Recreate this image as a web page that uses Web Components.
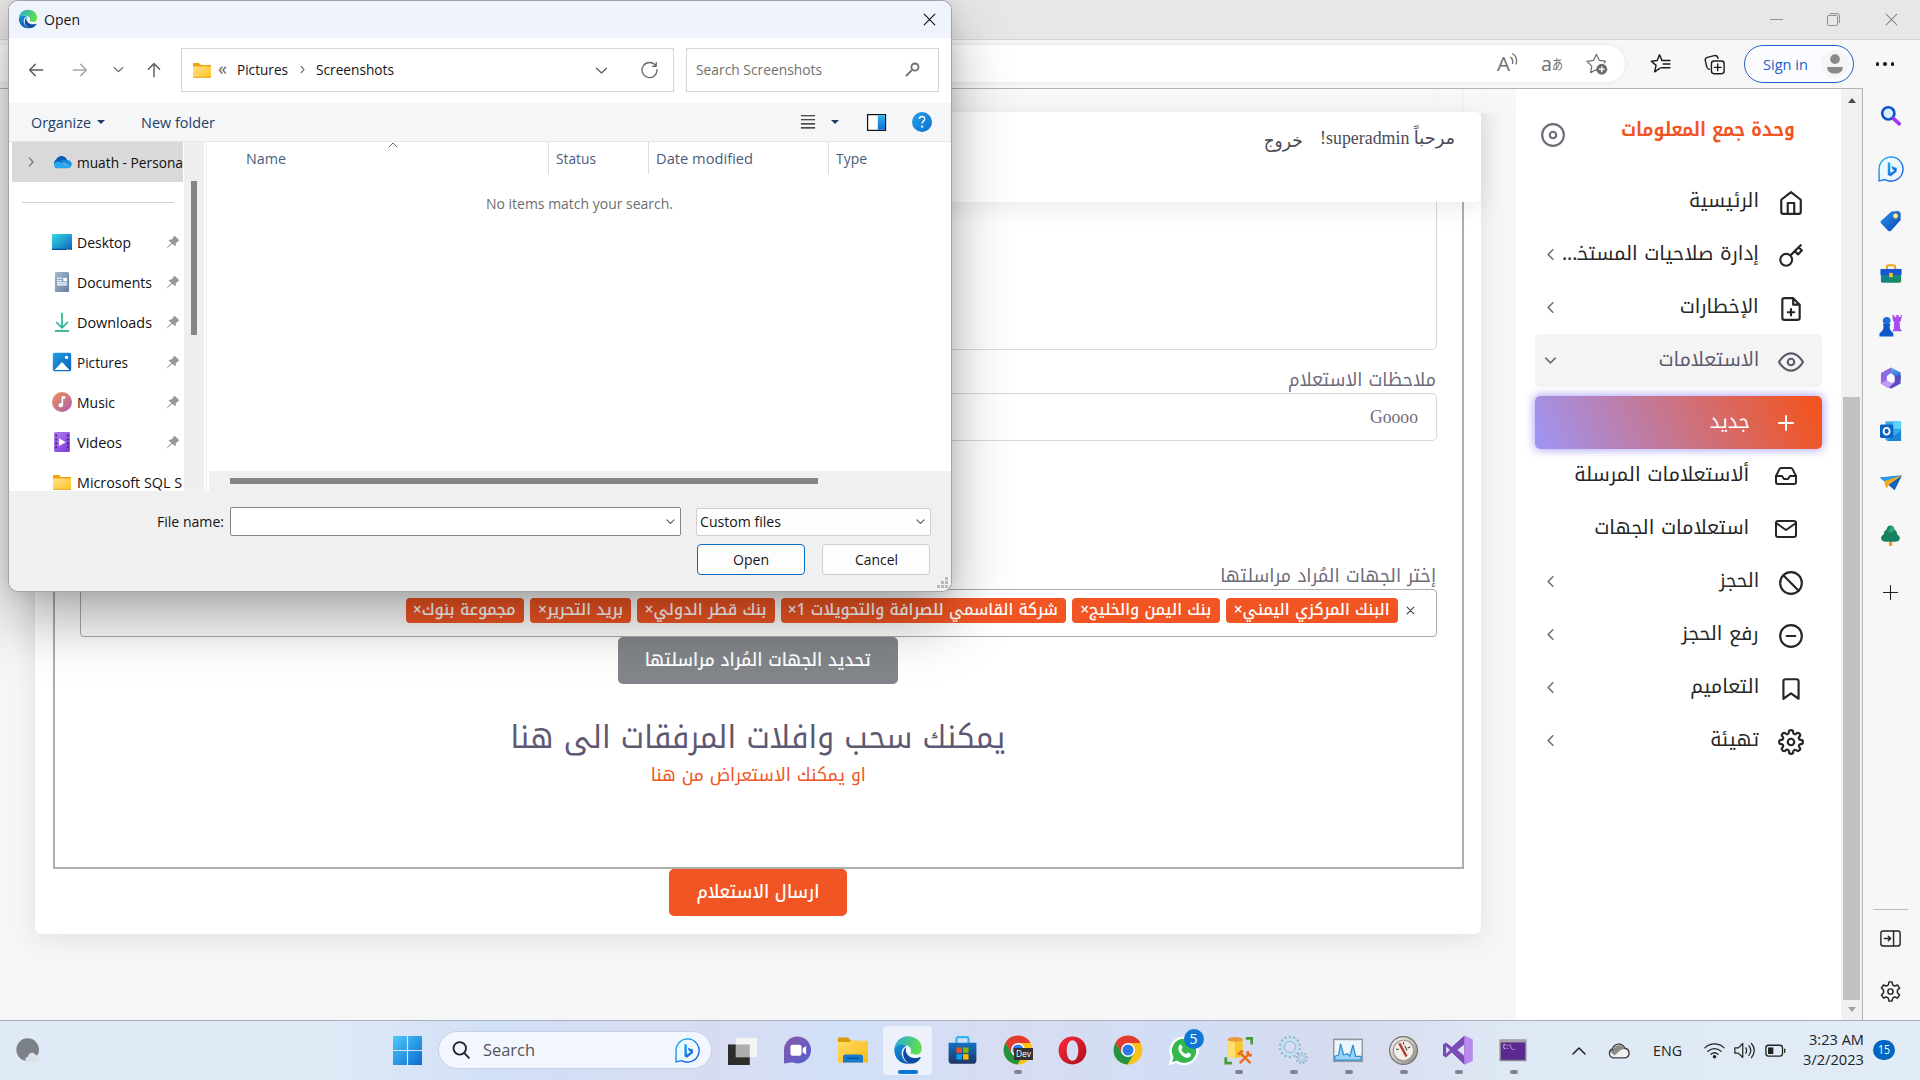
<!DOCTYPE html>
<html lang="en">
<head>
<meta charset="utf-8">
<title>Open</title>
<style>
html,body{margin:0;padding:0;width:1920px;height:1080px;overflow:hidden;background:#f7f7f7}
body{font-family:"Open Sans","Noto Sans",sans-serif}
</style>
</head>
<body>
<desk-top></desk-top>
<script>
const A='"Noto Kufi Arabic","Noto Sans Arabic","DejaVu Sans",sans-serif';
const bingB='<path d="M9 5.5l2.4.9v9.2l4-2.2-2-1-1.2-3.1 5 1.8v3.2L11.4 19 9 17.4z" fill="url(#b)"/>';
const grad=(id,a,b,x='1',y='1')=>`<linearGradient id="${id}" x1="0" y1="0" x2="${x}" y2="${y}"><stop stop-color="${a}"/><stop offset="1" stop-color="${b}"/></linearGradient>`;
const line=(s,w=2)=>`<g fill="none" stroke="currentColor" stroke-width="${w}" stroke-linecap="round" stroke-linejoin="round">${s}</g>`;
const chrome='<circle cx="12" cy="12" r="11.5" fill="#fbc116"/><path d="M2 6.2A11.5 11.5 0 0 1 22 6.4H12L7 15z" fill="#e33b2e"/><path d="M2 6.2A11.5 11.5 0 0 0 11.5 23.5L16.8 15 7.2 15z" fill="#229342"/><circle cx="12" cy="12" r="5.6" fill="#fff"/><circle cx="12" cy="12" r="4.4" fill="#2f78ea"/>';
const teeth=(cx,cy,r,n,w,h)=>Array.from({length:n},(_,i)=>`<rect x="${cx-w/2}" y="${cy-r-h}" width="${w}" height="${h+1}" rx=".5" transform="rotate(${360/n*i} ${cx} ${cy})"/>`).join('');
const ICONS={
edge:grad('e1','#25a7dd','#62dd4e','1','.3')+grad('e2','#1493df','#0c63b8','.4','1')+'<path d="M1 11.5C1.5 5 6.5 1 12 1c6 0 11 4.2 11 9.6 0 3.8-2.7 5.6-5.8 5.6-2.8 0-3.8-1-3.2-2 1.2-2 .2-5-3.6-6C6.500 7.200 2.500 8.500 1 11.500z" fill="url(#e1)"/><path d="M1 11.8C2 8 6.500 6.800 10.800 8.300 7.500 10 6.200 13 7.200 16.500 8.200 20 11 22.400 14.500 22.700 7 24.600 1 19 1 11.800z" fill="url(#e2)"/><path d="M10.600 9.500C6.500 13 7.600 19.500 12.800 22.600c4 1 7.600-1.200 9.200-4.300.3-.7-.2-.9-.8-.6C16 20 8.800 16.600 10.600 9.500z" fill="#0b4ba0"/><path d="M13.800 14.500c-.8 1.200.4 3.200 3.800 3 1.800 0 3.400-.6 4.400-1.200l-4-1z" fill="#fff" opacity=".75"/><circle cx="12.200" cy="12.400" r="2" fill="#eef6ff"/>',
folder:grad('f','#ffe089','#ffc526')+'<path d="M3 5h6l2 2h10v5H3z" fill="#f0a410"/><path d="M3 8.500h18V19.500H3z" fill="url(#f)"/><path d="M3 18.800h18v1H3z" fill="#e3a328"/>',
left:line('<path d="M21 12H3.500M11 4.500L3.500 12l7.500 7.500"/>',1.9),
right:line('<path d="M3 12h17.500M13 4.500l7.500 7.500-7.500 7.500"/>',1.9),
up:line('<path d="M12 21V3.500M4.500 11L12 3.500l7.500 7.500"/>',1.9),
down:line('<path d="M4 8.500l8 7.500 8-7.500"/>',2.3),
chevR:line('<path d="M9 5l6.500 7L9 19"/>',2.2),
chevL:line('<path d="M15 18l-6-6 6-6"/>',2),
chevD:line('<path d="M6 9l6 6 6-6"/>',2),
x:line('<path d="M3.500 3.500l17 17M20.500 3.500l-17 17"/>',1.8),
refresh:line('<path d="M20 7.500A9.500 9.500 0 1 0 21.500 12M20.500 3v5h-5"/>',1.6),
mag:line('<circle cx="15.500" cy="8.500" r="5"/><path d="M11.500 12.500L3.500 20.500"/>',2.6),
search:line('<circle cx="10.500" cy="10" r="7.500"/><path d="M16 15.800L21.500 21.500"/>',2.2),
onedrive:'<path d="M4 17a5 5 0 0 1 1-8 7 7 0 0 1 12-1.500l1.500 3z" fill="#0a5db5"/><path d="M9 10.500l10-1a5 5 0 0 1 3.500 8z" fill="#1490df"/><path d="M4.500 19.500a4.500 4.500 0 0 1 0-7.500c2-1.200 4-.7 5.500.2l13 5.300c-.8 1.500-2 2-3.500 2z" fill="#28a8ea"/>',
desktop:grad('d','#35d9e3','#0b62c0')+'<rect y="2.500" width="24" height="19" rx="1.500" fill="url(#d)"/><path d="M0 20h24v1.500H0z" fill="#0b4e94"/><path d="M18 20.300h1.500v1H18zM21 20.300h1.500v1H21z" fill="#fff"/>',
doc:grad('d','#a6bad0','#647f9f')+'<rect x="3.500" width="17" height="24" rx="1.500" fill="url(#d)"/><path d="M6 7.500h6M6 10.500h6M6 13h12M6 15.500h12" stroke="#fff" stroke-width="1.400"/><rect x="13.500" y="7" width="4.500" height="4" fill="#fff"/>',
dl:'<path d="M12 1v17M5 12l7 7 7-7" fill="none" stroke="#22b893" stroke-width="2"/><path d="M3.500 22.800h17" stroke="#1fa98a" stroke-width="2"/>',
pic:grad('d','#229fe4','#0a5fb8')+'<rect x="1" y="1" width="22" height="22" rx="2" fill="url(#d)"/><path d="M3 21.500L12 12l9 9.500z" fill="#fff"/><circle cx="17.500" cy="6.500" r="2" fill="#fff"/>',
music:grad('d','#f39353','#a85cb4')+'<circle cx="12" cy="12" r="12" fill="url(#d)"/><circle cx="10.500" cy="15.800" r="2.600" fill="#fff"/><path d="M11.500 16V5h4.500v3h-2.600v8z" fill="#fff"/>',
video:grad('d','#b27cf0','#7b38d8')+'<rect x="2.500" width="19" height="24" rx="1.500" fill="url(#d)"/><path d="M5 3v19M19 3v19" stroke="#4b1f8c" stroke-width="2.200" stroke-dasharray="2.500 2.200"/><path d="M8.500 7.500l8 4.700-8 4.700z" fill="#fff"/>',
pin:'<path d="M14.500 1l8.500 8.500-2 .8-4 3.700c.3 2.500-.1 4-1.200 5L10.500 15 3.500 21.500 1 23l1.500-2.500L9 13.500 4.500 9c1-1 3-1.500 5-1.200L13.500 3z" fill="#8f989f"/>',
help:grad('d','#29a0e8','#0671cf')+'<circle cx="12" cy="12" r="12" fill="url(#d)"/><path d="M8.800 8.500c.2-4 6.500-4 6.500-.2 0 2.500-3.100 2.600-3.100 5.500" fill="none" stroke="#fff" stroke-width="1.700"/><circle cx="12.200" cy="17.600" r="1.300" fill="#fff"/>',
list:'<path d="M3.500 4.500h17M3.500 9.300h17M3.500 14.200h17M3.500 19h17" stroke="#111" stroke-width="1.300"/>',
pane:grad('d','#33b4ee','#0a6fd0','0','1')+'<rect x="1.800" y="3" width="20.500" height="18" fill="#fff" stroke="#111" stroke-width="1.400"/><path d="M13.500 3.700h8.200v16.600h-8.200z" fill="url(#d)"/>',
starplus:line('<path d="M13 19l-1-.8-6.200 3.300 1.300-6.800L2 9.700l6.800-.9L12 2.500l3 6.300 6.500.8-1.500 1.800"/>',1.3)+'<circle cx="17.500" cy="18" r="5.700" fill="#6b6b6b"/><path d="M17.500 15v6M14.500 18h6" stroke="#fff" stroke-width="1.500"/>',
fav:line('<path d="M12 16.500l-5.800 4 1.500-7L2.500 9l6.400-.8L11.500 2l2.600 6.200h3M15.500 12h7.300M13.500 16.200h9.300M15.500 8.200h7.300"/>',1.6),
coll:line('<rect x="8.500" y="8" width="14.500" height="14.500" rx="3"/><path d="M15.700 11.500v7.500M12 15.300h7.500M6 17.500c-1.500-.2-2.300-1-2.700-2.500L1.500 7.500C1 5.500 2 4.300 3.800 3.800l8-2C14 1.500 15.500 2.500 16 5"/>',1.6),
user:'<circle cx="12" cy="12" r="12" fill="#f5f5f5"/><circle cx="12" cy="7.800" r="4.200" fill="#888"/><path d="M5.500 14.500h13c.6 3.500-2.300 5.700-6.500 5.700s-7.100-2.200-6.500-5.700z" fill="#888"/>',
disc:line('<circle cx="12" cy="12" r="10"/><circle cx="12" cy="12" r="3"/>'),
home:line('<path d="M3 9l9-7 9 7v11a2 2 0 0 1-2 2H5a2 2 0 0 1-2-2z"/><path d="M9 22V12h6v10"/>'),
key:line('<path d="M21 2l-2 2m-7.610 7.610a5.500 5.500 0 1 1-7.778 7.778 5.500 5.500 0 0 1 7.777-7.777zm0 0L15.500 7.500m0 0l3 3L22 7l-3-3m-3.500 3.500L19 4"/>'),
file:line('<path d="M14 2H6a2 2 0 0 0-2 2v16a2 2 0 0 0 2 2h12a2 2 0 0 0 2-2V8zM14 2v6h6M12 18v-6M9 15h6"/>'),
eye:line('<path d="M1 12s4-8 11-8 11 8 11 8-4 8-11 8-11-8-11-8z"/><circle cx="12" cy="12" r="3"/>'),
plus:line('<path d="M12 5v14M5 12h14"/>'),
thinplus:line('<path d="M12 2v20M2 12h20"/>',1.5),
inbox:line('<path d="M22 12h-6l-2 3h-4l-2-3H2"/><path d="M5.450 5.110L2 12v6a2 2 0 0 0 2 2h16a2 2 0 0 0 2-2v-6l-3.450-6.890A2 2 0 0 0 16.760 4H7.240a2 2 0 0 0-1.790 1.110z"/>'),
mail:line('<rect x="2" y="4" width="20" height="16" rx="2"/><path d="M22 6l-10 7L2 6"/>'),
ban:line('<circle cx="12" cy="12" r="10"/><path d="M4.930 4.930l14.140 14.140"/>'),
minus:line('<circle cx="12" cy="12" r="10"/><path d="M8 12h8"/>'),
book:line('<path d="M19 21l-7-5-7 5V5a2 2 0 0 1 2-2h10a2 2 0 0 1 2 2z"/>'),
gear:line('<circle cx="12" cy="12" r="3"/><path d="M19.400 15a1.650 1.650 0 0 0 .33 1.820l.06.06a2 2 0 0 1-2.830 2.830l-.06-.06a1.650 1.650 0 0 0-2.800 1.170V21a2 2 0 0 1-4 0v-.09A1.650 1.650 0 0 0 7.100 19.730l-.06.06a2 2 0 0 1-2.830-2.830l.06-.06A1.650 1.650 0 0 0 3.090 14H3a2 2 0 0 1 0-4h.09A1.650 1.650 0 0 0 4.270 7.100l-.06-.06a2 2 0 0 1 2.830-2.830l.06.06A1.650 1.650 0 0 0 10 3.090V3a2 2 0 0 1 4 0v.09a1.650 1.650 0 0 0 2.900 1.180l.06-.06a2 2 0 0 1 2.830 2.830l-.06.06A1.650 1.650 0 0 0 20.910 10H21a2 2 0 0 1 0 4h-.09a1.650 1.650 0 0 0-1.510 1z"/>'),
gear6:line('<circle cx="12" cy="12" r="3"/><path d="M9.500 4.500L10.300 1h3.400l.8 3.500 2.200 1.300 3.500-1.200 2.200 3.500-2.500 2.500v2.800l2.500 2.500-2.200 3.500-3.500-1.200-2.200 1.300-.8 3.500h-3.400l-.8-3.500-2.200-1.300-3.500 1.200-2.200-3.500 2.500-2.500v-2.800L1.600 8.100l2.200-3.500 3.500 1.200z"/>',1.7),
panel:line('<rect x="1" y="3.500" width="22" height="17" rx="2.500"/><path d="M15.500 4v16M5 12h7M9.500 9.300l2.700 2.700-2.700 2.700"/>',1.6),
rsearch:'<circle cx="9.500" cy="9.500" r="7" fill="#d8efff" stroke="#0c55c8" stroke-width="3"/><path d="M15.500 15.500l6.500 6" stroke="#9b3df0" stroke-width="4.200" stroke-linecap="round"/>',
bing:grad('b','#1fb5ee','#1650d8')+'<path d="M12 .8A11.200 11.200 0 1 1 6.500 21.800L1 23V12A11.200 11.200 0 0 1 12 .8z" fill="#eef8ff" stroke="url(#b)" stroke-width="1.300"/>'+bingB,
tag:grad('d','#2b95ea','#0b46b8')+'<path d="M1 12L12.500 1.500 20 1l2.500 2v8L12 22.500c-1 .8-2 .8-3 0L1.500 15c-.9-1-1.300-2-.5-3z" fill="url(#d)"/><circle cx="17" cy="6.500" r="2.500" fill="#fff3b0" stroke="#f7bd26"/>',
tool:grad('d','#0b7fae','#1c8b52')+'<path d="M7.500 7V4.500c0-1.500 1-2 2-2h5c1 0 2 .5 2 2V7" fill="none" stroke="#e9a81c" stroke-width="2.200"/><rect x="1" y="10" width="22" height="11.500" rx="1.500" fill="url(#d)"/><path d="M.5 6.500h23V13H.5z" fill="#1556d4"/><rect x="10" y="10.500" width="4" height="5" rx="1" fill="#f6bc2b"/>',
chess:'<path d="M14 1h2v2h2V1h2.500v2h2V1H24l-1 6-1.500 1 .5 7 2 3H14l1.500-3 .3-7L14.500 7z" fill="#a94cf2"/><circle cx="8" cy="7" r="4" fill="#1670d8"/><path d="M4 10.500h8l-1 2.500c0 3 1.500 5 4 7v3.500H.5V20c3-2 4.300-4 4.300-7z" fill="#0f58c9"/>',
m365:grad('a','#68c1f5','#2b57d0')+'<path d="M12 .5L22.500 6v8l-7-3.500L12 6.500l-5 4V4z" fill="url(#a)"/><path d="M12 .5L1 6.500V18l8 5 3-5-4.500-3V8.500L12 6z" fill="#8d6ae0"/><path d="M22.500 9v9L12 23.700 8 21l8-5V10z" fill="#5a4bc0"/><path d="M1 17.500l8 5.500 8-7-5 1.500-4.500-3z" fill="#c49af0"/><circle cx="12" cy="12" r="4" fill="#fafafe"/>',
outlook:'<path d="M6 1.500h17V22H6z" fill="#36a9e8"/><path d="M14.500 1.500H23v8h-8.500z" fill="#5fd3f7"/><path d="M7 23l16-11v11z" fill="#1b83d6"/><rect y="5" width="14.500" height="14.500" rx="1.500" fill="#0c64be"/><ellipse cx="7.200" cy="12.300" rx="3.300" ry="3.700" fill="none" stroke="#fff" stroke-width="2"/>',
plane:'<path d="M0 6L24 3.500 9 14z" fill="#1b78d8"/><path d="M24 3.500L16 20 9 14z" fill="#1060c0"/><path d="M0 6l21-1.500L7.500 12z" fill="#2a99e8"/><path d="M4.500 10L24 3.500 9.500 14 7 18.500z" fill="#f5a91b"/>',
tree:'<rect x="10.200" y="17" width="3.800" height="7" rx="1" fill="#f0a21d"/><path d="M12 .5c3 0 4 2.500 4.500 5 3 1.500 3 4 3 5 3 1.500 3.500 4 3 6-1 2-3 2.500-5 2.500H6.500c-3 0-5-1-5.200-3.500C1 13 2.500 11.500 4.500 10.500c-.2-3 1.300-4.500 3-5C8 2.500 9 .5 12 .5z" fill="#168060"/><path d="M12 .5c3 0 4 2.500 4.500 5-1 3-4 4-8 2 2-2 3-4 3.500-7z" fill="#27a37c"/>',
win:grad('d','#4fc9fb','#0a6cd0')+'<path d="M0 0h11.500v11.500H0zM12.500 0H24v11.500H12.500zM0 12.500h11.500V24H0zM12.500 12.500H24V24H12.500z" fill="url(#d)"/>',
taskview:'<rect x="0" y="7" width="18" height="17" fill="#2d2d2b"/><rect x="6.500" y="1.500" width="17.500" height="16" fill="#f4f4f4"/><path d="M6.500 7H18v10.500H6.500z" fill="#aeaeac"/>',
chat:grad('d','#8a5aa8','#4f5fd0')+'<path d="M12 .5a11.500 11.500 0 1 1-5 22L0 23.500V12A11.500 11.500 0 0 1 12 .5z" fill="url(#d)"/><rect x="5.500" y="7.500" width="9.500" height="9.500" rx="1.800" fill="#fff"/><path d="M16 10.500l3-2v7.500l-3-2z" fill="#fff"/>',
explorer:grad('d','#ffdc66','#fbb813')+'<path d="M0 2h8l2.500 2.500H16V9H0z" fill="#d99b08"/><path d="M0 5.500h9l1.500-1H24V22H0z" fill="url(#d)"/><path d="M4 22v-4.500C4 16 5 15.500 6 15.500h12c1 0 2 .5 2 2V22z" fill="#147bd0"/><path d="M7 18.700h10" stroke="#0a4e92"/>',
store:grad('d','#1372c4','#1d3562','0','1')+'<path d="M7 6V2.500c0-1 .5-1.500 1.500-1.500h7c1 0 1.500.5 1.500 1.500V6" fill="none" stroke="#2fb8f0" stroke-width="1.800"/><path d="M.5 5.500h23V20c0 2-1 3-3 3h-17c-2 0-3-1-3-3z" fill="url(#d)"/><path d="M7 9.500h4.500V14H7z" fill="#f25022"/><path d="M12.500 9.500H17V14h-4.500z" fill="#7fba00"/><path d="M7 15h4.500v4.500H7z" fill="#00a4ef"/><path d="M12.500 15H17v4.500h-4.500z" fill="#ffb900"/>',
chrome:chrome,
opera:grad('d','#ff2a38','#a80d1c')+'<path d="M12 .5C5.500.5.500 5.500.500 12S5.500 23.500 12 23.500 23.500 18.500 23.500 12 18.500.500 12 .500zm0 3c3 0 4.800 4 4.800 8.500s-1.800 8.500-4.800 8.500S7.200 16.500 7.200 12 9 3.500 12 3.500z" fill="url(#d)" fill-rule="evenodd"/>',
wa:'<path d="M12.500 1A11.200 11.200 0 1 1 6.500 21.700L.5 23.500 2.200 17A11.200 11.200 0 0 1 12.500 1z" fill="#fff"/><path d="M12.500 3A9.300 9.300 0 1 1 7 19.800L3.300 21l1-4A9.300 9.300 0 0 1 12.500 3z" fill="#35b84b"/><path d="M9 7.500c.6-.4 1.200-.2 1.500.5l.8 1.900c-.1.700-1 1-1 1.500.8 1.700 2 2.700 3.700 3.400.6-.1 1-1.200 1.600-1.200l2.100 1.100c.5 1.900-1.500 3.100-3.200 2.900C10.500 16.800 6 11.500 9 7.500z" fill="#fff"/>',
ssms:'<path d="M3 2.500v14c0 2 12.500 2 12.500 0v-14z" fill="#f8c92c"/><path d="M3 2.500v14c0 1 3 1.500 6 1.500V4z" fill="#fbe070"/><ellipse cx="9.200" cy="2.800" rx="6.200" ry="2" fill="#e79a3c"/><path d="M18 2h5v5M1.500 17.500v5h5" fill="none" stroke="#4a9a3c" stroke-width="2.300"/><path d="M13 22.500l8-8M14 14.500l8 8" stroke="#ee6b1e" stroke-width="2"/><path d="M11.500 15.500l4-3.500M19.500 12.500l.5 3 3 .5" fill="none" stroke="#ee6b1e" stroke-width="2.300"/>',
gears:'<g fill="#8fb4cd">'+teeth(9.5,9.5,6.8,14,1.8,2.2)+teeth(19,18.5,3.2,9,1.5,1.7)+'</g><circle cx="9.500" cy="9.500" r="6" fill="none" stroke="#c4dff0" stroke-width="3"/><circle cx="9.500" cy="9.500" r="4.500" fill="none" stroke="#8fb4cd" stroke-width=".7"/><circle cx="19" cy="18.500" r="2.500" fill="none" stroke="#b4d0e8" stroke-width="2.300"/>',
chart:'<rect x=".5" y="3.500" width="23" height="17.500" fill="#eef6fc" stroke="#90979d" stroke-width="1.300"/><path d="M1.500 17l3-1L6 7l2.500 9 3-1 2 2 2.500-9 2 9h4.500v3H1.500z" fill="#9bd4f7" stroke="#2e8fd0" stroke-width="1"/>',
gauge:grad('d','#fff','#8a8580')+'<circle cx="12" cy="12" r="11.500" fill="url(#d)" stroke="#756e68"/><circle cx="12" cy="12" r="8.500" fill="#f2eee8" stroke="#a69a90"/><path d="M8.500 6l6 11" stroke="#b3392d" stroke-width="2"/><path d="M6 11l2 0M12 5v2M17.500 9l-2 1M13 8l2 4" stroke="#5b5552"/>',
vs:'<path d="M17 .5l6.500 3v17L17 23.500 7 14 2.500 18 0 16.500v-9L2.500 6 7 9.500zM17 7.500L11.500 12 17 16.500zM2.500 9v6l3-3z" fill="#7a4ab8" fill-rule="evenodd"/><path d="M17 .5l6.500 3v17L17 23.500z" fill="#b98aee"/>',
term:'<rect x="1" y="3.500" width="22" height="17.500" fill="#5b2a90" stroke="#8d8d8d" stroke-width="1.200"/><path d="M1 3.500h22v2H1z" fill="#a8a6aa"/>',
moon:'<circle cx="11" cy="11" r="8.500" fill="#7c8087"/><path d="M12 20.500c-3.500 0-3.500-4-.8-4.200.3-3.500 4.500-4 5.600-1.300 4-.5 4.400 5.300.8 5.500z" fill="#dde2e8"/>',
caret:line('<path d="M4 16l8-8 8 8"/>',2),
cloud:'<path d="M6 19.500a5 5 0 0 1-1-9.700A7 7 0 0 1 18.300 9 5.300 5.300 0 0 1 18.500 19.500z" fill="#f1f1f1"/><path d="M3 13c0-2 1.500-3 3-3.200A6.500 6.500 0 0 1 18 9.500l-4 1.500-7 6z" fill="#8b8b8b"/><path d="M6 19.500a5 5 0 0 1-1-9.700A7 7 0 0 1 18.300 9 5.300 5.300 0 0 1 18.500 19.500z" fill="none" stroke="#3f3f3f" stroke-width="1.500"/>',
wifi:line('<path d="M1 9c6.500-6 15.500-6 22 0M4.500 12.800c4.500-4 10.500-4 15 0M8 16.300c2.500-2.200 5.500-2.200 8 0"/>',1.5)+'<circle cx="12" cy="19" r="2" fill="#222"/>',
vol:line('<path d="M1 9h4l5-5v16l-5-5H1zM13.500 9c1.300 2 1.300 4 0 6M17 6.500c2.800 3.500 2.800 7.500 0 11M20 4c4 5 4 11 0 16"/>',1.4),
bat:line('<rect x="1" y="6" width="19" height="12.500" rx="3"/><path d="M22.500 10.500v3.500"/>',1.5)+'<rect x="3.500" y="8.500" width="6" height="7.500" fill="#222"/>',
min:line('<path d="M0 12h24"/>',1.8),
max:line('<rect x="1" y="4.500" width="18.500" height="18.500" rx="2"/><path d="M6 1.200h13.500a3.500 3.500 0 0 1 3.500 3.500V18"/>',1.8),
clear:line('<path d="M3 3l18 18M21 3L3 21"/>',3.2)
};
const make=(name,html)=>customElements.define(name,class extends HTMLElement{
  constructor(){super();this.attachShadow({mode:'open'}).innerHTML=html}
});

make('desk-top',`<style>:host{display:flex;flex-direction:column;width:1920px;height:1080px;position:relative;overflow:hidden}
task-bar{position:relative;z-index:5}open-dialog{position:absolute;left:9px;top:1px;z-index:3}</style>
<browser-window></browser-window><open-dialog></open-dialog><task-bar></task-bar>`);

make('browser-window',`<style>:host{display:flex;flex-direction:column;height:1020px;background:#f7f7f7;font-family:"Open Sans",sans-serif}
.title{height:39px;background:#e7e7e7;border-bottom:1px solid #d4d4d4;display:flex;justify-content:flex-end;align-items:center;gap:44px;padding-right:21px;color:#8b8b8b;box-sizing:content-box}
.bar{height:48px;display:flex;align-items:center;justify-content:flex-end;color:#1b1b1b}
.addr{flex:1;height:37px;border-radius:0 19px 19px 0;background:#fff;display:flex;align-items:center;justify-content:flex-end;color:#707070;box-shadow:0 0 4px #e4e4e4;margin-bottom:1px}
.read{position:relative;font-size:20px;line-height:24px;display:flex}
.sign{box-sizing:border-box;width:110px;height:38px;border:1.500px solid #2460c4;border-radius:19px;background:#fbfcff;display:flex;align-items:center;justify-content:space-between;padding:0 4px 1px 18px;color:#2460c4;font-size:15px}
.dots{display:flex;gap:4px;margin:0 26px 0 22px}.dots i{width:3.500px;height:3.500px;border-radius:2px;background:#111}
.main{display:flex;height:932px}
</style>
<div class="title"><ui-icon name="min" s="13"></ui-icon><ui-icon name="max" s="13"></ui-icon><ui-icon name="x" s="15"></ui-icon></div>
<div class="bar"><div class="addr"><span class="read"><fit-text w="13">A</fit-text><svg width="9" height="20" viewBox="0 0 9 20" fill="none" stroke="#707070" stroke-width="1.300"><path d="M0 5c3 1 3 4 2.500 7M2 1.500c5 2 5 7 4 11"/></svg></span>
<span style="font:20px/24px 'Open Sans','Noto Sans CJK JP';margin:0 22px 0 22px;display:flex;align-items:center"><fit-text w="11">a</fit-text><fit-text w="11" style="font-size:14px">あ</fit-text></span>
<ui-icon name="starplus" s="23" style="margin-right:17px"></ui-icon></div>
<ui-icon name="fav" s="22" style="margin:0 33px 0 24px"></ui-icon><ui-icon name="coll" s="21" style="margin-right:19px"></ui-icon>
<div class="sign"><fit-text w="45">Sign in</fit-text><ui-icon name="user" s="28"></ui-icon></div><div class="dots"><i></i><i></i><i></i></div></div>
<div class="main"><page-view></page-view><edge-rail></edge-rail></div>`);

make('edge-rail',`<style>:host{display:flex;flex-direction:column;align-items:center;width:57px;box-sizing:border-box;padding-right:1.500px;background:#f7f7f7;color:#222}
div{height:53px;display:flex;align-items:center}hr{width:35px;border:0;border-top:1px solid #bdbdbd;margin:286px 0 2px}</style>
<div style="height:55px"><ui-icon name="rsearch" s="21"></ui-icon></div><div style="height:51px"><ui-icon name="bing" s="26"></ui-icon></div>
<div><ui-icon name="tag" s="22"></ui-icon></div><div><ui-icon name="tool" s="22"></ui-icon></div><div style="height:51px"><ui-icon name="chess" s="23"></ui-icon></div><div style="height:54px"><ui-icon name="m365" s="22"></ui-icon></div><div style="height:52px"><ui-icon name="outlook" s="22"></ui-icon></div><div style="height:52px"><ui-icon name="plane" s="22"></ui-icon></div><div><ui-icon name="tree" s="21"></ui-icon></div><div style="height:61px"><ui-icon name="thinplus" s="17"></ui-icon></div>
<hr><div><ui-icon name="panel" s="21"></ui-icon></div><div><ui-icon name="gear6" s="21"></ui-icon></div>`);

make('page-view',`<style>:host{display:flex;width:1863px;box-sizing:border-box;border-top:1px solid #b3b3b3;border-right:1px solid #b3b3b3}
.sb{width:21px;background:#f1f1f1;display:flex;flex-direction:column;align-items:center}
.u{border:4.500px solid transparent;border-bottom:5px solid #4c4c4c;border-top:0;margin-top:9px}
.d{border:4.500px solid transparent;border-top:5px solid #a0a0a0;border-bottom:0;margin-top:7px}
.t{margin-top:294px;width:17px;height:603px;background:#c1c1c1}</style>
<inquiry-form></inquiry-form><app-menu></app-menu><div class="sb"><div class="u"></div><div class="t"></div><div class="d"></div></div>`);

make('inquiry-form',`<style>:host{display:block;position:relative;width:1516px;background:#f6f6f6;overflow:hidden;direction:rtl;font:19px/24px ${A};color:#6e6b7b}
.card{margin:0 35px;height:845px;background:#fff;border-radius:0 0 6px 6px;box-shadow:0 4px 24px rgba(34,41,47,.1);display:flex;flex-direction:column;align-items:center}
.set{width:1411px;height:780px;box-sizing:border-box;border:2px solid #aeaeae;border-top:0;padding:0 25px;display:flex;flex-direction:column}
.area{height:260px;border:1px solid #d8d6de;border-top:0;border-radius:0 0 5px 5px}
.lab{display:flex;align-items:flex-end;box-sizing:border-box;padding-bottom:1px}
.inp{height:46px;border:1px solid #d8d6de;border-radius:5px;display:flex;align-items:center;padding:0 18px;font:18px/20px "Liberation Serif",serif}
.inp fit-text{margin-bottom:1px}
.sel{height:46px;border:1px solid #aaa;border-radius:4px;display:flex;align-items:flex-start;padding:0 21px}
.sel>span{display:flex;width:9px;margin:16px 0 0 8px;color:#4e4b58}
tag-chip{margin:8px 0 0 6px}
.btn{display:flex;align-items:center;justify-content:center;height:47px;border-radius:5px;color:#fff;align-self:center;box-sizing:border-box;padding-bottom:2px;font-size:18px;font-weight:500}
.g{width:280px;background:#82868b}.o{width:178px;background:#f15523}
h2{margin:34px 0 0;font:32px/40px ${A};color:#5e5873;text-align:center}
.lk{color:#f15523;text-align:center;font-size:18px;margin-top:5px}
.veil{position:absolute;left:0;right:0;top:0;height:24px;background:rgba(247,247,247,.92);z-index:1}
.nav{position:absolute;left:35px;top:23px;width:1446px;height:90px;box-sizing:border-box;background:#fff;border-radius:6px;box-shadow:0 4px 24px rgba(34,41,47,.1);display:flex;align-items:flex-start;padding:13px 26px;gap:17px;color:#4b4b55;z-index:2;font:18px/26px "Liberation Serif","DejaVu Sans",serif}
</style>
<div class="veil"></div><div class="nav"><fit-text w="135">مرحباً superadmin!</fit-text><fit-text w="39" style="margin-top:2px;font-family:'DejaVu Sans';font-size:19px">خروج</fit-text></div>
<div class="card"><div class="set"><div class="area"></div>
<div class="lab" style="height:43px"><fit-text w="148">ملاحظات الاستعلام</fit-text></div><div class="inp"><fit-text w="48">Goooo</fit-text></div>
<div class="lab" style="height:148px"><fit-text w="216">إختر الجهات المُراد مراسلتها</fit-text></div>
<div class="sel"><span><ui-icon name="clear" s="9"></ui-icon></span><tag-chip style="width:172px"><fit-text w="156">البنك المركزي اليمني×</fit-text></tag-chip><tag-chip style="width:148px"><fit-text w="131">بنك اليمن والخليج×</fit-text></tag-chip><tag-chip style="width:285px"><fit-text w="270">شركة القاسمي للصرافة والتحويلات 1×</fit-text></tag-chip><tag-chip style="width:138px"><fit-text w="122">بنك قطر الدولي×</fit-text></tag-chip><tag-chip style="width:101px"><fit-text w="85">بريد التحرير×</fit-text></tag-chip><tag-chip style="width:118px"><fit-text w="103">مجموعة بنوك×</fit-text></tag-chip></div>
<div class="btn g"><fit-text w="226">تحديد الجهات المُراد مراسلتها</fit-text></div>
<h2><fit-text w="495">يمكنك سحب وافلات المرفقات الى هنا</fit-text></h2>
<div class="lk"><fit-text w="215">او يمكنك الاستعراض من هنا</fit-text></div></div>
<div class="btn o"><fit-text w="123">ارسال الاستعلام</fit-text></div></div>`);

make('tag-chip',`<style>:host{display:flex;align-items:center;justify-content:center;height:25px;box-sizing:border-box;padding:0 0 2px 0;background:#f15523;border-radius:4px;color:#fff;font-size:16px;font-weight:500;line-height:24px;flex:none}</style><slot></slot>`);

const row=(icon,w,t,c='')=>`<menu-row class="${c}"><ui-icon slot="i" name="${icon}" s="${c.includes('s')?24:26}"></ui-icon><fit-text w="${w}">${t}</fit-text>${c.includes('n')?'':`<ui-icon slot="c" name="${c.includes('a')?'chevD':'chevL'}" s="19"></ui-icon>`}</menu-row>`;
make('app-menu',`<style>:host{display:flex;flex-direction:column;width:325px;box-sizing:border-box;padding:0 19px;background:#fff;direction:rtl;font:19.500px/28px ${A};color:#262626}
header{height:86px;display:flex;justify-content:space-between;padding:0 27px 0 5px;box-sizing:border-box;color:#6e6b7b}
header fit-text{color:#f15523;font-weight:bold;font-size:19.500px;margin-top:27px}header ui-icon{margin-top:33px}
menu-row[class~=a]{background:#f4f4f4;border-radius:5px;color:#5f5b6c;margin-bottom:9px}
menu-row[class~=p]{background:linear-gradient(65deg,#9e95f5,#f15523 95%);border-radius:5px;color:#fff;box-shadow:0 0 10px 1px rgba(115,103,240,.6)}
</style><header><fit-text w="174">وحدة جمع المعلومات</fit-text><ui-icon name="disc" s="26"></ui-icon></header>`+
row('home',70,'الرئيسية','n')+row('key',197,'إدارة صلاحيات المستخ\u200d...')+row('file',79,'الإخطارات')+row('eye',101,'الاستعلامات','a')+row('plus',40,'جديد','s n p')+row('inbox',175,'ألاستعلامات المرسلة','s n')+row('mail',155,'استعلامات الجهات','s n')+row('ban',40,'الحجز')+row('minus',77,'رفع الحجز')+row('book',69,'التعاميم')+row('gear',49,'تهيئة'));

make('menu-row',`<style>:host{display:flex;align-items:center;height:53px;box-sizing:border-box;padding:0 18.500px 1px 6px}
:host([class~=s]){padding-right:24px}
.i{display:flex;margin-top:4px;margin-left:18.500px}:host([class~=s]) .i{margin:1px 0 0 24.500px}.c{display:flex;margin-right:auto;color:#6e6b7b}</style>
<span class="i"><slot name="i"></slot></span><slot></slot><span class="c"><slot name="c"></slot></span>`);

make('open-dialog',`<style>:host{display:flex;flex-direction:column;width:942px;height:590px;border-radius:9px;background:#fff;overflow:hidden;box-shadow:0 0 0 1px #a3a3a6,0 0 18px rgba(0,0,0,.1),0 28px 60px rgba(0,0,0,.34);font:15px/20px "Open Sans",sans-serif;color:#151515}
.t{height:37px;box-sizing:border-box;background:#eff3fb;display:flex;align-items:center;padding:0 14px 1px 9px;gap:6px}
.t fit-text{margin-bottom:1px}
.t ui-icon:last-child{margin-left:auto}
.n{height:65px;display:flex;align-items:center;color:#5f5f5f;box-sizing:border-box;padding:0 12px 2px 18px}
.b{height:44px;box-sizing:border-box;border:1px solid #d5d5d5;display:flex;align-items:center}
.b fit-text{margin-bottom:1px}
.k{height:39px;box-sizing:border-box;border-bottom:1px solid #e4e6ea;background:#f5f6f8;display:flex;align-items:center;color:#1f3d66;padding:0 19px 0 22px}
.tri{border:4px solid transparent;border-top-color:#1f3d66;border-bottom:0;margin-left:6px}
.m{display:flex;height:349px}
.tree{width:175px;overflow:hidden;color:#111}
.vs{width:20px;background:#efefef;margin-right:2px}.vs i{display:block;width:6px;height:154px;background:#858585;margin:39px 0 0 7px}
.ls{flex:1;border-left:1px solid #ececec;display:flex;flex-direction:column}
.hd{display:flex;height:32px;color:#4a5d7c;position:relative}.hd div{border-right:1px solid #dedede;box-sizing:border-box;padding:6px 0 0 7px}
.up{position:absolute;left:180px;top:-3px;display:flex;color:#666}
.em{flex:1;padding:19px 0 0 279px;color:#6d6d6d}
.hs{height:20px;background:#f0f0f0;margin-left:2px}.hs i{display:block;width:588px;height:6px;margin:7px 0 0 21px;background:#858585}
.f{flex:1;background:#f0f0f0;display:flex;flex-direction:column}
.f fit-text{margin-bottom:2px}
.r{display:flex;align-items:center}
.in{box-sizing:border-box;background:#fff;border:1px solid #858585;width:451px;height:29px;border-radius:2px;display:flex;align-items:center;justify-content:flex-end;padding-right:4px;margin:0 15px 0 6px;color:#555}
.co{box-sizing:border-box;background:#fdfdfd;border:1px solid #cfcfcf;width:235px;height:28px;border-radius:2px;display:flex;align-items:center;justify-content:space-between;padding:0 4px 0 3px}
.bt{box-sizing:border-box;width:108px;height:31px;border:1px solid #cecece;border-radius:4px;background:#fdfdfd;display:flex;align-items:center;justify-content:center}
.co ui-icon{color:#555}
.g{position:absolute;right:2px;bottom:2px}
</style>
<div class="t"><ui-icon name="edge" s="20"></ui-icon><fit-text w="36">Open</fit-text><ui-icon name="x" s="15" style="color:#111"></ui-icon></div>
<div class="n"><ui-icon name="left" s="18"></ui-icon><ui-icon name="right" s="18" style="margin-left:26px;color:#a5a5a5"></ui-icon><ui-icon name="down" s="13" style="margin-left:23px"></ui-icon><ui-icon name="up" s="18" style="margin-left:20px"></ui-icon>
<div class="b" style="width:493px;margin:0 12px 0 18px;padding:0 14px 0 8px;color:#151515"><ui-icon name="folder" s="24"></ui-icon><span style="color:#666;margin:0 10px 0 4px;display:flex"><fit-text w="9" style="font-size:18px;margin-bottom:3px">«</fit-text></span><fit-text w="51">Pictures</fit-text><ui-icon name="chevR" s="11" style="margin:0 8px 0 9px;color:#555"></ui-icon><fit-text w="78">Screenshots</fit-text><ui-icon name="down" s="15" style="margin:1px 0 0 auto;color:#666"></ui-icon><ui-icon name="refresh" s="19" style="margin-left:31px;color:#666"></ui-icon></div>
<div class="b" style="flex:1;padding:0 17px 0 9px;color:#707070;justify-content:space-between"><fit-text w="126">Search Screenshots</fit-text><ui-icon name="mag" s="17"></ui-icon></div></div>
<div class="k"><fit-text w="60">Organize</fit-text><i class="tri"></i><fit-text w="74" style="margin-left:36px">New folder</fit-text><ui-icon name="list" s="20" style="margin-left:auto"></ui-icon><i class="tri" style="margin:0 27px 0 13px"></i><ui-icon name="pane" s="21"></ui-icon><ui-icon name="help" s="20" style="margin-left:25px"></ui-icon></div>
<div class="m"><div class="tree"><tree-row class="top"><ui-icon slot="e" name="chevR" s="14"></ui-icon><ui-icon name="onedrive" s="20"></ui-icon><fit-text w="106">muath - Persona</fit-text></tree-row>
<hr style="border:0;border-top:1px solid #d0d0d0;margin:20px 10px 19px 13px">`+
[['desktop','Desktop',54],['doc','Documents',75],['dl','Downloads',75],['pic','Pictures',51],['music','Music',38],['video','Videos',45]].map(([i,t,w])=>`<tree-row><ui-icon name="${i}" s="20"></ui-icon><fit-text w="${w}">${t}</fit-text><ui-icon slot="p" name="pin" s="14"></ui-icon></tree-row>`).join('')+
`<tree-row><ui-icon name="folder" s="24" style="margin:0 -2px"></ui-icon><fit-text w="105">Microsoft SQL S</fit-text></tree-row></div>
<div class="vs"><i></i></div>
<div class="ls"><div class="hd"><div style="width:342px;padding-left:39px"><fit-text w="40">Name</fit-text></div><span class="up"><ui-icon name="caret" s="12"></ui-icon></span><div style="width:100px"><fit-text w="40">Status</fit-text></div><div style="width:180px"><fit-text w="97">Date modified</fit-text></div><div style="border:0"><fit-text w="31">Type</fit-text></div></div>
<div class="em"><fit-text w="187">No items match your search.</fit-text></div><div class="hs"><i></i></div></div></div>
<div class="f"><div class="r" style="margin:16px 0 0 148px"><fit-text w="67">File name:</fit-text><div class="in"><ui-icon name="down" s="11"></ui-icon></div><div class="co"><fit-text w="81">Custom files</fit-text><ui-icon name="down" s="11"></ui-icon></div></div>
<div class="r" style="margin:8px 0 0 688px;gap:17px"><div class="bt" style="border-color:#0a6cc4"><fit-text w="36">Open</fit-text></div><div class="bt"><fit-text w="43">Cancel</fit-text></div></div></div>
<svg class="g" width="12" height="12" fill="#b9b9b9"><path d="M8 0h3v3H8zM4 4h3v3H4zM8 4h3v3H8zM0 8h3v3H0zM4 8h3v3H4zM8 8h3v3H8z"/></svg>`);

make('tree-row',`<style>:host{display:flex;align-items:center;height:40px;box-sizing:border-box;padding:0 4px 0 43px;gap:5px;width:175px;position:relative;white-space:nowrap}
:host([class~=top]){background:#d9d9d9;width:171px;margin-left:3px;padding:0 0 0 12px;overflow:hidden}
.e{display:none}:host([class~=top]) .e{display:flex;width:23px;flex:none;color:#777}.p{margin-left:auto;display:flex}</style><span class="e"><slot name="e"></slot></span><slot></slot><span class="p"><slot name="p"></slot></span>`);

const app=(n,s,dot,extra='')=>`<task-item class="${dot?'run':''} ${n=='edge'?'act':''}"><ui-icon name="${n}" s="${s}"></ui-icon>${extra}</task-item>`;
make('task-bar',`<style>:host{display:flex;height:60px;box-sizing:border-box;border-top:1px solid #a9b1c0;background:linear-gradient(90deg,#dfeaf6 0,#dfeaf6 17%,#d1dff7 26%,#d8dcf2 37%,#d1e0f8 44%,#d8dcf1 53%,#d2def6 61%,#d7dbee 70%,#dfe9f5 79%,#e1ecf7);align-items:center;font:15px/20px "Open Sans",sans-serif;color:#222}
.s{box-sizing:border-box;width:274px;height:38px;border-radius:19px;background:#f2f6fe;border:1px solid #c8cfe0;display:flex;align-items:center;padding:0 11px 0 12px;margin:0 3px 1px 16px;color:#222}
.s fit-text{margin:0 auto 0 12px;font-size:17px;color:#555}
.clk{display:flex;flex-direction:column;align-items:flex-end;width:70px;gap:0;margin:0 0 3px 8px}
.nb{width:22px;height:20px;border-radius:10px;background:#0067c0;color:#fff;font-size:12px;display:flex;align-items:center;justify-content:center;margin:0 0 1px 9px}
.bd{position:absolute;left:28px;top:8px;width:20px;height:20px;border-radius:10px;background:#0f78d4;color:#fff;display:flex;align-items:center;justify-content:center;font-size:14px}
.dv{position:absolute;left:24px;top:27px;width:19px;height:12px;background:#333;color:#fff;font-size:9px;line-height:12px;display:flex;justify-content:center}
.cm{position:absolute;left:17px;top:21px;color:#fff;font:8px/10px "Liberation Mono",monospace}
</style><ui-icon name="moon" s="32" style="margin-left:13px"></ui-icon><ui-icon name="win" s="29" style="margin-left:348px"></ui-icon>
<div class="s"><ui-icon name="search" s="20"></ui-icon><fit-text w="52">Search</fit-text><ui-icon name="bing" s="25"></ui-icon></div>`+
app('taskview',29)+app('chat',28)+app('explorer',30)+app('edge',30)+app('store',29)+app('chrome',30,1,'<span class="dv"><fit-text w="15">Dev</fit-text></span>')+app('opera',29)+app('chrome',30)+app('wa',31,0,'<span class="bd">5</span>')+app('ssms',29,1)+app('gears',30,1)+app('chart',30,1)+app('gauge',29,1)+app('vs',30,1)+app('term',28,1,'<span class="cm"><fit-text w="12">C:\\_</fit-text></span>')+
`<ui-icon name="caret" s="18" style="margin-left:29px"></ui-icon><ui-icon name="cloud" s="22" style="margin-left:20px"></ui-icon><fit-text w="29" style="margin-left:23px;font-size:14.500px">ENG</fit-text><ui-icon name="wifi" s="21" style="margin-left:22px"></ui-icon><ui-icon name="vol" s="21" style="margin-left:9px"></ui-icon><ui-icon name="bat" s="21" style="margin-left:10px"></ui-icon>
<div class="clk"><fit-text w="55">3:23 AM</fit-text><fit-text w="61">3/2/2023</fit-text></div><div class="nb"><fit-text w="12">15</fit-text></div>`);

make('task-item',`<style>:host{display:flex;position:relative;width:55.070px;height:59px;align-items:center;justify-content:center;flex:none;box-sizing:border-box;padding-bottom:1px}
:host([class~=act])::before{content:"";position:absolute;left:3px;top:5px;width:49px;height:49px;border-radius:4px;background:#edf1fb}
:host([class~=run])::after,:host([class~=act])::after{content:"";position:absolute;bottom:6px;left:24px;width:8px;height:4px;border-radius:2px;background:#7f8290}
:host([class~=act])::after{left:18px;width:20px;background:#0a78d4}
::slotted(ui-icon){position:relative}</style><slot></slot>`);

customElements.define('ui-icon',class extends HTMLElement{
  constructor(){super();this.attachShadow({mode:'open'})}
  connectedCallback(){const s=this.getAttribute('s')||24;
    this.shadowRoot.innerHTML=`<style>:host{display:inline-flex;flex:none}svg{display:block}</style><svg width="${s}" height="${s}" viewBox="0 0 24 24">${ICONS[this.getAttribute('name')]||''}</svg>`}
});
/* Text set to an exact width, whatever the metrics of the font in use. */
customElements.define('fit-text',class extends HTMLElement{
  constructor(){super();this.attachShadow({mode:'open'}).innerHTML='<style>:host{display:inline-flex;flex:none;white-space:nowrap}span{display:block;flex:none;transform-origin:0 50%}</style><span><slot></slot></span>'}
  connectedCallback(){const w=+this.getAttribute('w'),sp=this.shadowRoot.querySelector('span');
    const n=sp.getBoundingClientRect().width;this.style.width=w+'px';
    if(getComputedStyle(this).direction==='rtl')sp.style.transformOrigin='100% 50%';
    if(n)sp.style.transform=`scaleX(${w/n})`}
});
</script>
</body>
</html>
